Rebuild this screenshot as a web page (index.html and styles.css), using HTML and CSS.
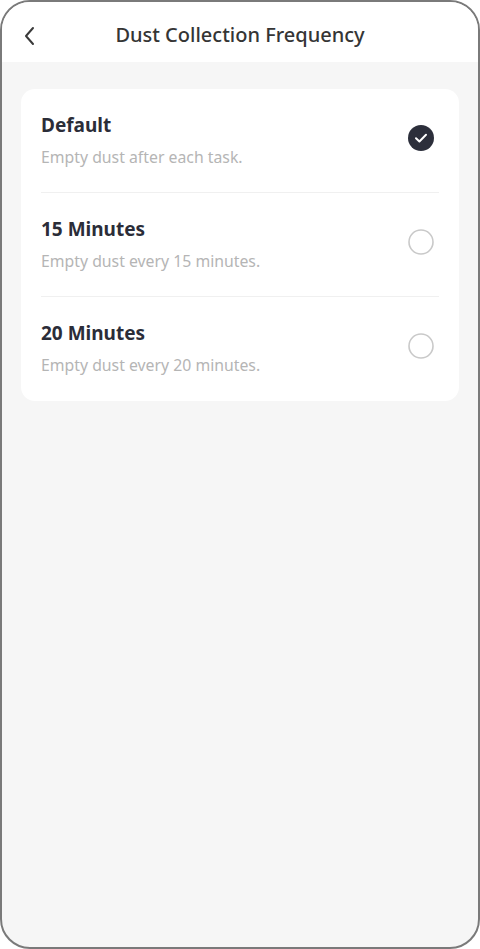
FILE: index.html
```html
<!DOCTYPE html>
<html>
<head>
<meta charset="utf-8">
<link rel="stylesheet" href="styles.css">
</head>
<body>
<div class="phone">
  <header class="topbar">
    <svg class="back" width="14" height="20" viewBox="0 0 14 20"><path d="M10 2 L3 10 L10 18" fill="none" stroke="#3a3a3a" stroke-width="2" stroke-linecap="round" stroke-linejoin="round"/></svg>
    <h1 class="title">Dust Collection Frequency</h1>
  </header>
  <main class="content">
    <div class="card">
      <div class="row">
        <div class="texts">
          <div class="name">Default</div>
          <div class="desc">Empty dust after each task.</div>
        </div>
        <svg class="radio" width="26" height="26" viewBox="0 0 26 26"><circle cx="13" cy="13" r="13" fill="#2c2f3b"/><path d="M8 13.3 L11.4 16.5 L18 9.8" fill="none" stroke="#fff" stroke-width="2" stroke-linecap="round" stroke-linejoin="round"/></svg>
      </div>
      <div class="row">
        <div class="texts">
          <div class="name">15 Minutes</div>
          <div class="desc">Empty dust every 15 minutes.</div>
        </div>
        <svg class="radio" width="26" height="26" viewBox="0 0 26 26"><circle cx="13" cy="13" r="12" fill="none" stroke="#c9c9c9" stroke-width="1.6"/></svg>
      </div>
      <div class="row">
        <div class="texts">
          <div class="name">20 Minutes</div>
          <div class="desc">Empty dust every 20 minutes.</div>
        </div>
        <svg class="radio" width="26" height="26" viewBox="0 0 26 26"><circle cx="13" cy="13" r="12" fill="none" stroke="#c9c9c9" stroke-width="1.6"/></svg>
      </div>
    </div>
  </main>
</div>
</body>
</html>
```
FILE: styles.css
```css
* { box-sizing: border-box; margin: 0; padding: 0; }
html, body { width: 480px; height: 949px; background: #fff; }
body { font-family: "Noto Sans", "Open Sans", sans-serif; }
.phone {
  width: 480px;
  height: 949px;
  border: 2px solid #7a7a7a;
  border-radius: 30px;
  background: #f6f6f6;
  overflow: hidden;
  display: flex;
  flex-direction: column;
}
.topbar {
  height: 60px;
  background: #fff;
  display: flex;
  align-items: center;
  justify-content: center;
  position: relative;
}
.back { position: absolute; left: 21px; top: 24px; }
.title {
  font-size: 20px;
  font-weight: 500;
  color: #353535;
  margin-top: 4px;
}
.content { padding: 27px 19px 0 19px; }
.card {
  background: #fff;
  border-radius: 14px;
  padding: 0 20px;
}
.row {
  height: 104px;
  display: flex;
  align-items: center;
  justify-content: space-between;
  border-bottom: 1.5px solid #f0f0f0;
}
.row:last-child { border-bottom: none; }
.texts { display: flex; flex-direction: column; gap: 8px; margin-top: -2px; }
.name { font-size: 19px; font-weight: 700; color: #2b2d38; line-height: 26px; }
.desc { font-size: 15.8px; color: #b5b5b5; line-height: 22px; }
.radio { margin-right: 5px; margin-top: -6px; }
```
